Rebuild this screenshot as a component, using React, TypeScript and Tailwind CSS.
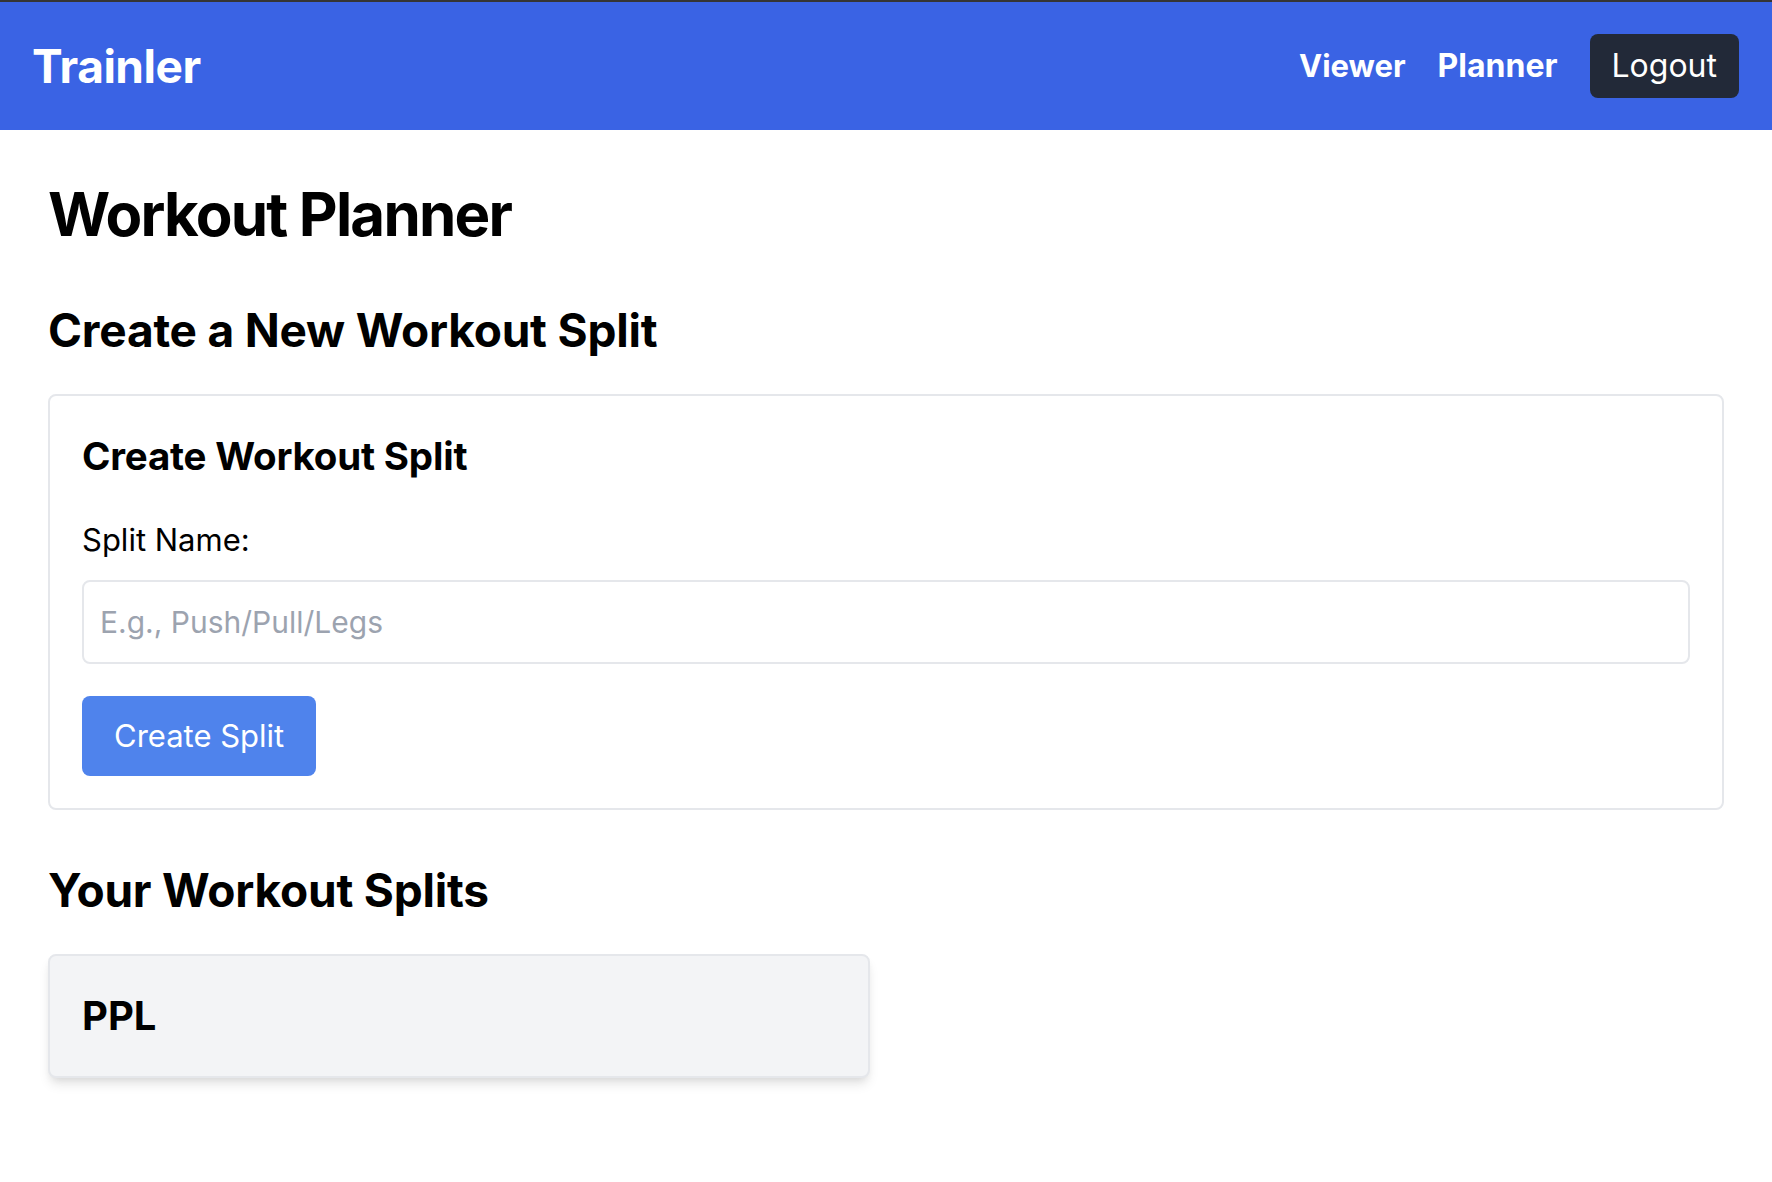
import { useState } from 'react';

type Split = { id: number; name: string };

export default function App() {
  const [splitName, setSplitName] = useState('');
  const [splits, setSplits] = useState<Split[]>([{ id: 1, name: 'PPL' }]);

  const handleCreate = (e: React.FormEvent) => {
    e.preventDefault();
    if (!splitName.trim()) return;
    setSplits([...splits, { id: Date.now(), name: splitName.trim() }]);
    setSplitName('');
  };

  return (
    <div className="min-h-screen bg-white text-black font-['Inter','Liberation_Sans',sans-serif]">
      <nav className="flex items-center justify-between h-[130px] border-t-2 border-[#353535] bg-[#3a63e4] pl-[32px] pr-[33px]">
        <a href="#" className="text-[46px] leading-[64px] font-bold text-white tracking-[-0.5px]">Trainler</a>
        <div className="flex items-center gap-[32px]">
          <a href="#" className="text-[31px] leading-[48px] font-bold text-white">Viewer</a>
          <a href="#" className="text-[32px] leading-[48px] font-bold text-white">Planner</a>
          <button className="h-[64px] px-[22px] rounded-[8px] bg-[#222938] text-white text-[32px] leading-[48px]">
            Logout
          </button>
        </div>
      </nav>

      <main className="p-[48px]">
        <h1 className="text-[60px] leading-[72px] font-bold tracking-[-1.8px] mb-[48px]">Workout Planner</h1>

        <h2 className="text-[46px] leading-[64px] font-bold tracking-[-0.2px] mb-[32px]">Create a New Workout Split</h2>

        <form onSubmit={handleCreate} className="border-2 border-[#e5e7eb] rounded-[8px] p-[32px]">
          <h3 className="text-[38.5px] leading-[56px] font-bold tracking-[-0.2px] mb-[32px]">Create Workout Split</h3>
          <label className="block text-[31px] leading-[48px] mb-[16px]">Split Name:</label>
          <input
            type="text"
            value={splitName}
            onChange={(e) => setSplitName(e.target.value)}
            placeholder="E.g., Push/Pull/Legs"
            className="block w-full h-[84px] border-2 border-[#e5e7eb] rounded-[8px] px-[16px] text-[30px] placeholder:text-[#9ca3af] outline-none"
          />
          <button
            type="submit"
            className="mt-[32px] h-[80px] px-[32px] rounded-[8px] bg-[#4f83ec] text-white text-[31px] leading-[48px]"
          >
            Create Split
          </button>
        </form>

        <h2 className="mt-[48px] mb-[32px] text-[46px] leading-[64px] font-bold tracking-[-0.2px]">Your Workout Splits</h2>

        <div className="grid grid-cols-2 gap-[32px]">
          {splits.map((s) => (
            <div
              key={s.id}
              className="bg-[#f3f4f6] border-2 border-[#e5e7eb] rounded-[8px] p-[32px] shadow-[0_8px_12px_-2px_rgba(0,0,0,0.1),0_4px_8px_-4px_rgba(0,0,0,0.1)]"
            >
              <h3 className="text-[40px] leading-[56px] font-bold">{s.name}</h3>
            </div>
          ))}
        </div>
      </main>
    </div>
  );
}
